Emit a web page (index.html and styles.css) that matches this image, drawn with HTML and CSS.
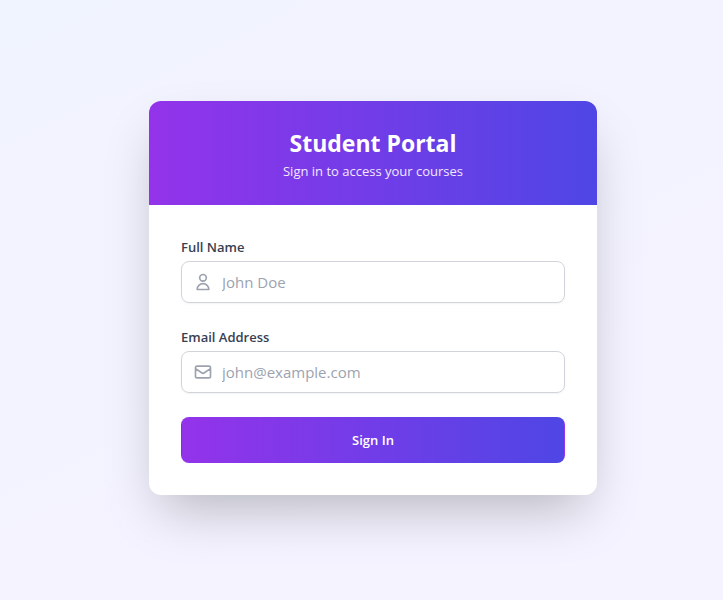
FILE: index.html
```html
<!DOCTYPE html>
<html lang="en">
<head>
<meta charset="utf-8">
<meta name="viewport" content="width=device-width, initial-scale=1">
<title>Student Portal</title>
<link rel="stylesheet" href="styles.css">
</head>
<body>
<main class="card">
  <header class="card-header">
    <h1 class="title">Student Portal</h1>
    <p class="subtitle">Sign in to access your courses</p>
  </header>
  <form class="form">
    <div class="field">
      <label class="label" for="name">Full Name</label>
      <div class="control">
        <svg class="icon" viewBox="0 0 24 24" aria-hidden="true"><path d="M16 7a4 4 0 11-8 0 4 4 0 018 0zM12 14a7 7 0 00-7 7h14a7 7 0 00-7-7z"/></svg>
        <input class="input" id="name" type="text" placeholder="John Doe">
      </div>
    </div>
    <div class="field">
      <label class="label" for="email">Email Address</label>
      <div class="control">
        <svg class="icon" viewBox="0 0 24 24" aria-hidden="true"><path d="M3 8l7.89 5.26a2 2 0 002.22 0L21 8M5 19h14a2 2 0 002-2V7a2 2 0 00-2-2H5a2 2 0 00-2 2v10a2 2 0 002 2z"/></svg>
        <input class="input" id="email" type="email" placeholder="john@example.com">
      </div>
    </div>
    <button class="submit" type="submit">Sign In</button>
  </form>
</main>
</body>
</html>
```
FILE: styles.css
```css
*, *::before, *::after { box-sizing: border-box; }

body {
  margin: 0;
  min-height: 100vh;
  padding: 0 0 4px 23px;
  display: flex;
  align-items: center;
  justify-content: center;
  font-family: "Segoe UI", "Open Sans", "Noto Sans", sans-serif;
  font-size: 16px;
  line-height: 24px;
  background: linear-gradient(155deg, #eff4ff, #f2f3ff 20%, #f5f3ff);
}

.card {
  width: 100%;
  max-width: 448px;
  overflow: hidden;
  border-radius: 12px;
  background: #fff;
  box-shadow: 0 25px 50px -12px rgba(0, 0, 0, 0.25);
}

.card-header {
  padding: 24px;
  text-align: center;
  color: #fff;
  background: linear-gradient(to right, #9333ea, #4f46e5);
}

.title {
  margin: 0;
  font-size: 23px;
  line-height: 36px;
  font-weight: 700;
}

.subtitle {
  margin: 0;
  font-size: 13px;
  line-height: 20px;
  color: #f3e8ff;
}

.form {
  display: flex;
  flex-direction: column;
  gap: 24px;
  padding: 32px;
}

.field {
  display: flex;
  flex-direction: column;
  gap: 4px;
}

.label {
  font-size: 13px;
  line-height: 20px;
  font-weight: 600;
  color: #374151;
}

.control {
  display: flex;
  align-items: center;
  gap: 9px;
  padding: 0 11px;
  border: 1px solid #d1d5db;
  border-radius: 8px;
  box-shadow: 0 1px 2px rgba(0, 0, 0, 0.05);
}

.control:focus-within { border-color: #9333ea; }

.icon {
  flex: none;
  width: 20px;
  height: 20px;
  fill: none;
  stroke: #9ca3af;
  stroke-width: 2;
  stroke-linecap: round;
  stroke-linejoin: round;
}

.input {
  flex: 1;
  min-width: 0;
  height: 40px;
  padding: 0;
  border: 0;
  outline: 0;
  background: transparent;
  font-family: inherit;
  font-size: 15px;
  line-height: 24px;
  color: #111827;
}

.input::placeholder { color: #9ca3af; opacity: 1; }

.submit {
  padding: 12px 16px;
  border: 1px solid transparent;
  border-radius: 8px;
  font-family: inherit;
  font-size: 13px;
  line-height: 20px;
  font-weight: 600;
  color: #fff;
  background: linear-gradient(to right, #9333ea, #4f46e5);
  cursor: pointer;
}
```
